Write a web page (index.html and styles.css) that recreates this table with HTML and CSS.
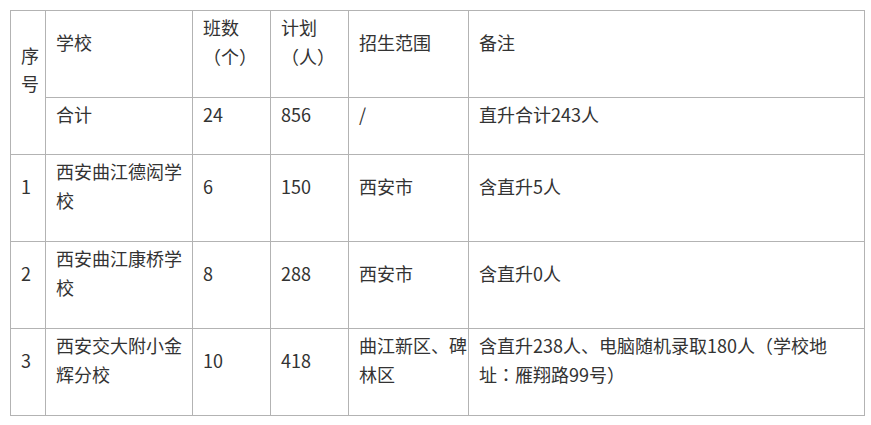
FILE: index.html
```html
<!DOCTYPE html>
<html lang="zh-CN">
<head>
<meta charset="utf-8">
<title>招生计划</title>
<link rel="stylesheet" href="styles.css">
</head>
<body>
<table class="plan">
  <colgroup>
    <col class="c-no">
    <col class="c-school">
    <col class="c-class">
    <col class="c-plan">
    <col class="c-area">
    <col class="c-note">
  </colgroup>
  <tbody>
    <tr class="row-head">
      <td rowspan="2" class="no-head"><p>序号</p></td>
      <td><p>学校</p></td>
      <td><p>班数<span class="nb"><span class="fw" lang="zh-TW">（</span>个<span class="fw" lang="zh-TW">）</span></span></p></td>
      <td><p>计划<span class="nb"><span class="fw" lang="zh-TW">（</span>人<span class="fw" lang="zh-TW">）</span></span></p></td>
      <td class="area"><p>招生范围</p></td>
      <td><p>备注</p></td>
    </tr>
    <tr class="row-total">
      <td><p>合计</p></td>
      <td><p>24</p></td>
      <td><p>856</p></td>
      <td class="area"><p>/</p></td>
      <td><p>直升合计243人</p></td>
    </tr>
    <tr class="row-item">
      <td><p>1</p></td>
      <td><p>西安曲江德闳学校</p></td>
      <td><p>6</p></td>
      <td><p>150</p></td>
      <td class="area"><p>西安市</p></td>
      <td><p>含直升5人</p></td>
    </tr>
    <tr class="row-item">
      <td><p>2</p></td>
      <td><p>西安曲江康桥学校</p></td>
      <td><p>8</p></td>
      <td><p>288</p></td>
      <td class="area"><p>西安市</p></td>
      <td><p>含直升0人</p></td>
    </tr>
    <tr class="row-item">
      <td><p>3</p></td>
      <td><p>西安交大附小金辉分校</p></td>
      <td><p>10</p></td>
      <td><p>418</p></td>
      <td class="area"><p>曲江新区、碑林区</p></td>
      <td><p>含直升238人、电脑随机录取180人<span class="nb"><span class="fw" lang="zh-TW">（</span>学</span>校地<span class="nb">址<span class="fw" lang="zh-TW">：</span></span>雁翔路99<span class="nb">号<span class="fw" lang="zh-TW">）</span></span></p></td>
    </tr>
  </tbody>
</table>
</body>
</html>
```

FILE: styles.css
```css
html, body {
  margin: 0;
  padding: 0;
  background: #ffffff;
}

body {
  font-family: "Noto Sans CJK SC", "Noto Sans", sans-serif;
  font-size: 18px;
  color: #333333;
}

.plan {
  border-collapse: collapse;
  table-layout: fixed;
  width: 854px;
  margin: 10px 0 0 10px;
}

.c-no { width: 35px; }
.c-school { width: 147px; }
.c-class { width: 78px; }
.c-plan { width: 78px; }
.c-area { width: 120px; }
.c-note { width: 396px; }

.plan td {
  border: 1px solid #b3b3b3;
  padding: 2px 8px 5px 10px;
  vertical-align: middle;
  line-height: 29px;
  word-break: break-all;
}

.plan td.area {
  padding-right: 0;
}

.plan p {
  margin: 0 0 21px 0;
}

.row-total p {
  margin-bottom: 20px;
}

.plan td.no-head {
  padding-top: 0;
  padding-bottom: 6px;
  line-height: 28.5px;
}

.nb {
  white-space: nowrap;
}

.fw {
  display: inline-block;
  width: 1em;
  text-align: center;
  font-family: "Noto Sans CJK TC", sans-serif;
}
```
